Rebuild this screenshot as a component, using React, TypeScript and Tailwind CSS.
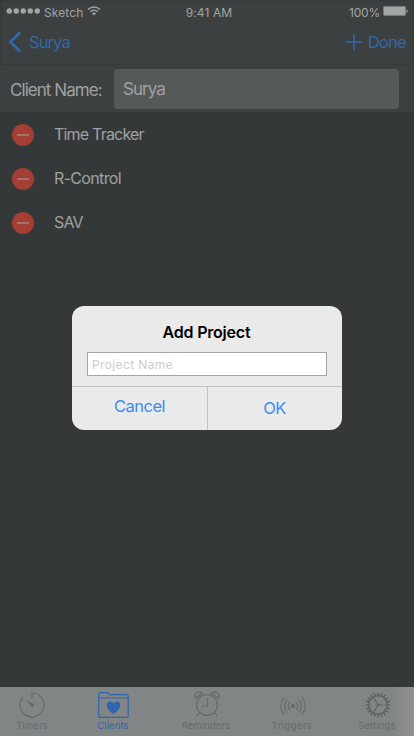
import React from "react";

const projects = [
  { name: "Time Tracker", spacing: "tracking-[-0.8px]" },
  { name: "R-Control", spacing: "tracking-[-0.66px]" },
  { name: "SAV", spacing: "tracking-[-0.85px]" },
];

function StatusBar() {
  return (
    <div className="grid h-5 grid-cols-3 items-center text-[12px] leading-5 text-[#a3a5a5]">
      <div className="flex items-center pl-[6px] pt-[3px]">
        <svg width="35" height="6" viewBox="0 0 35 6" fill="#a3a5a5" className="-mt-[4px]">
          {[3, 10, 17, 24, 31].map((x) => (
            <circle key={x} cx={x + 0.25} cy="3" r="2.75" />
          ))}
        </svg>
        <span className="ml-[3px] w-[41px] tracking-[0.1px]">Sketch</span>
        <svg width="14" height="10" viewBox="0 0 14 10" fill="none" stroke="#a3a5a5" strokeWidth="1.4" className="ml-[2px] -mt-[4px]">
          <path d="M1 3.4Q7-1.3 13 3.4M3.1 5.7Q7 2.7 10.9 5.7" />
          <path d="M4.8 7.3Q7 5.6 9.2 7.3L7 9.5Z" fill="#a3a5a5" stroke="none" />
        </svg>
      </div>
      <div className="pl-[4px] pt-[3px] text-center tracking-[0.1px]">9:41 AM</div>
      <div className="flex items-center justify-end pr-[6px] pt-[3px]">
        <span className="mr-[3px] tracking-[-0.2px]">100%</span>
        <svg width="25" height="10" viewBox="0 0 25 10" className="-mt-[4px]">
          <rect x="0.5" y="0.5" width="22" height="9" rx="1" fill="#a3a5a5" stroke="#777a7a" />
          <path d="M23.3 3.2q1.4.4 1.4 1.8t-1.4 1.8z" fill="#a3a5a5" />
        </svg>
      </div>
    </div>
  );
}

function NavBar() {
  return (
    <div className="flex h-[45px] items-center justify-between pb-[1px] text-[16px] leading-5 text-[#3367a8]">
      <button className="flex items-center pl-[8px]">
        <svg width="14" height="22" viewBox="0 0 14 22" fill="none" stroke="#3367a8" strokeWidth="3">
          <path d="M12.2 1.2L2.5 11l9.7 9.8" />
        </svg>
        <span className="-mt-[1px] ml-[7px] text-[16.5px] tracking-[-0.9px]">Surya</span>
      </button>
      <button className="flex items-center pr-[8px]">
        <svg width="16" height="16" viewBox="0 0 16 16" stroke="#3367a8" strokeWidth="1.6">
          <path d="M0 8h16M8 0v16" />
        </svg>
        <span className="-mt-[1px] ml-[6px] text-[16.5px] tracking-[-0.7px]">Done</span>
      </button>
    </div>
  );
}

function MinusBadge() {
  return (
    <span className="ml-3 flex h-[22px] w-[22px] items-center justify-center rounded-full bg-[#a53e35]">
      <span className="h-[2px] w-[12px] bg-[#a8706b]" />
    </span>
  );
}

function TimerIcon() {
  return (
    <svg width="26" height="26" viewBox="0 0 26 26" fill="none" stroke="#666a6b" strokeWidth="1.2">
      <path d="M13 6.500V1A12 12 0 1 1 4.100 5" />
      <path d="M6.400 7.200l8.200 5.100q1.100 1.200.1 2.200t-2.300 0Z" fill="#666a6b" stroke="none" />
    </svg>
  );
}

function ClientsIcon() {
  return (
    <svg width="31" height="26" viewBox="0 0 31 26" fill="none" stroke="#2e65ad" strokeWidth="1.2" strokeLinejoin="round">
      <path d="M.7 6V2Q.7.7 2 .7h8.2l1.5 2h17.2q1.3 0 1.3 1.3v20q0 1.3-1.3 1.3H2Q.7 25.300.7 24ZM.7 6h29.500" />
      <path d="M15.500 22.200Q8.700 17.600 8.700 13.100c0-4.300 5.200-4.800 6.800-1.400 1.600-3.400 6.800-2.900 6.800 1.400q0 4.500-6.800 9.100Z" fill="#2e65ad" stroke="none" />
    </svg>
  );
}

function ReminderIcon() {
  return (
    <svg width="26" height="26" viewBox="0 0 26 26" fill="none" stroke="#666a6b" strokeWidth="1.2" className="ml-px">
      <circle cx="13" cy="14" r="10.400" />
      <path d="M13.500 7v8H8M5.500 21.600L2.700 25M20.500 21.600l2.800 3.400M1.500 7.500C-.5 2.500 4-.7 8.500 2ZM24.500 7.500C26.500 2.500 22-.7 17.500 2Z" />
    </svg>
  );
}

function TriggerIcon() {
  return (
    <svg width="26" height="20" viewBox="0 0 26 20" fill="none" stroke="#666a6b" strokeWidth="1.2" className="ml-px">
      <circle cx="13" cy="10" r="2" fill="#666a6b" stroke="none" />
      <path d="M9.600 6q-2.800 4 0 8M16.400 6q2.800 4 0 8M7 3.500q-5 6.500 0 13M19 3.500q5 6.500 0 13M4.200 1q-7 9 0 18M21.800 1q7 9 0 18" />
    </svg>
  );
}

function SettingsIcon() {
  return (
    <svg width="26" height="26" viewBox="0 0 26 26" fill="none" stroke="#606465" className="ml-px">
      <circle cx="13" cy="13" r="9.200" strokeWidth="1.600" />
      <path d="M13 13h8.500M13 13L8.600 5.300M13 13L8.600 20.700" strokeWidth="1.200" />
      <circle cx="13" cy="13" r="1.300" fill="#606465" stroke="none" />
      {Array.from({ length: 20 }, (_, i) => (
        <path key={i} d="M12 3.500l.4-3h1.200l.4 3Z" fill="#606465" stroke="none" transform={`rotate(${i * 18} 13 13)`} />
      ))}
    </svg>
  );
}

function TabBar() {
  const label = "block h-[12px] text-[9.5px] leading-[12px] whitespace-nowrap";
  return (
    <div className="flex h-[49px] bg-linear-to-r from-[#828586] from-95% to-[#8f9192] text-[#666a6b]">
      <div className="flex w-[64px] flex-col items-center justify-between pt-[5px] pb-[4px]">
        <TimerIcon />
        <span className={`${label} tracking-[0.1px]`}>Timers</span>
      </div>
      <div className="ml-[17px] flex w-[64px] flex-col items-center justify-between pt-[5px] pb-[4px] text-[#2e65ad]">
        <ClientsIcon />
        <span className={`${label} tracking-[0.1px]`}>Clients</span>
      </div>
      <div className="ml-[29px] flex w-[64px] flex-col items-center justify-between pt-[4px] pb-[4px]">
        <ReminderIcon />
        <span className={`${label} tracking-[0.05px]`}>Reminders</span>
      </div>
      <div className="ml-[22px] flex w-[64px] flex-col items-center justify-between pt-[9px] pb-[4px]">
        <TriggerIcon />
        <span className={`${label} tracking-[0.4px]`}>Triggers</span>
      </div>
      <div className="ml-[21px] flex w-[64px] flex-col items-center justify-between pt-[5px] pb-[4px]">
        <SettingsIcon />
        <span className={`${label} tracking-[0.1px]`}>Settings</span>
      </div>
    </div>
  );
}

function AddProjectDialog() {
  return (
    <div className="absolute left-[72px] top-[306px] flex h-[124px] w-[270px] flex-col overflow-hidden rounded-[12px] bg-[#eaeaea]">
      <h2 className="mt-[16px] pr-[1px] text-center text-[16px] leading-5 font-semibold tracking-[-0.2px] text-black">Add Project</h2>
      <div className="mx-[15px] mt-[10px] flex h-6 items-center border border-[#a5a5a5] bg-white pl-[4px] pt-[2px] text-[12px] tracking-[0.38px] text-[#cdcdd0]">
        Project Name
      </div>
      <div className="mt-[10px] flex flex-1 border-t border-[#c3c3c3] text-[16.5px] leading-5 text-[#3b8cf5]">
        <button className="w-[135px] pb-[5px] tracking-[-0.5px]">Cancel</button>
        <button className="flex-1 border-l border-[#c3c3c3] pr-[1px] pb-[1px] tracking-[-0.6px]">OK</button>
      </div>
    </div>
  );
}

export default function App() {
  return (
    <div className="relative flex h-[736px] w-[414px] flex-col overflow-hidden bg-[#343838] font-['Inter','Liberation_Sans',sans-serif]">
      <div className="bg-[#3c4040]">
        <div className="shadow-[inset_0_0_3px_#2f3333]">
          <StatusBar />
          <NavBar />
        </div>
        <div className="flex h-[47px] items-center text-[17px] text-[#a0a2a2]">
          <span className="w-[114px] pl-[10px] pt-[4px] tracking-[-0.95px] whitespace-nowrap">Client Name:</span>
          <div className="mt-[1px] flex h-10 w-[285px] items-center rounded-[4px] bg-[#555959] pl-[9px] pt-[1px] tracking-[-0.95px]">Surya</div>
        </div>
      </div>
      <div className="flex-1 pt-[1px]">
        {projects.map((p) => (
          <div key={p.name} className="flex h-11 items-center text-[16px] text-[#a0a2a2]">
            <MinusBadge />
            <span className={`ml-5 -mt-[2px] ${p.spacing}`}>{p.name}</span>
          </div>
        ))}
      </div>
      <TabBar />
      <AddProjectDialog />
    </div>
  );
}
